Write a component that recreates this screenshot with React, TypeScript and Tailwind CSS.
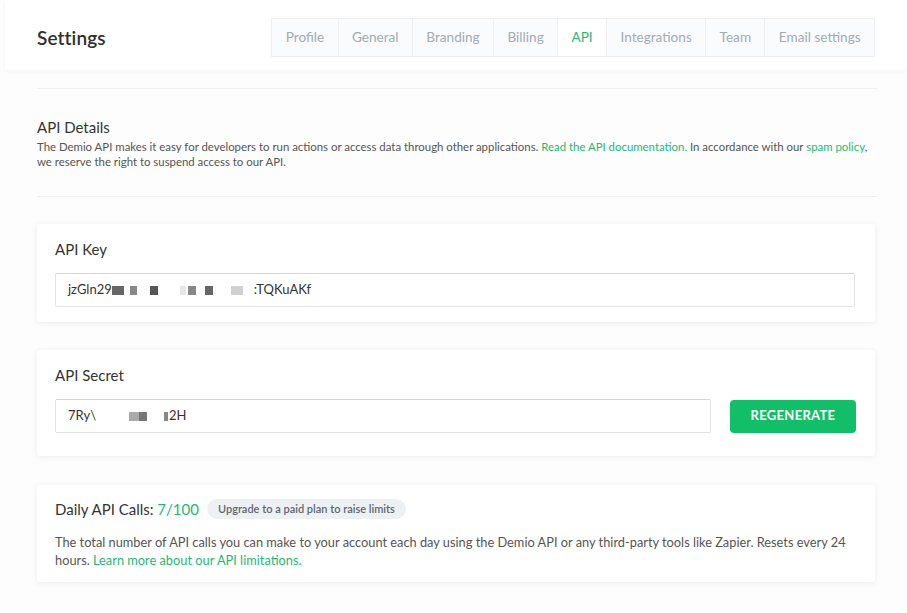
const tabs = ["Profile", "General", "Branding", "Billing", "API", "Integrations", "Team", "Email settings"];

// redacted pixel blocks in the key fields
function Block({ w, c, ml }: { w: string; c: string; ml: string }) {
  return <span className={`inline-block h-[9px] align-middle ${w} ${c} ${ml}`} />;
}

function Card({ children, className = "" }: { children: React.ReactNode; className?: string }) {
  return (
    <div className={`bg-white rounded-[3px] shadow-[0_1px_6px_rgba(0,0,0,0.07)] px-[18px] ${className}`}>
      {children}
    </div>
  );
}

export default function App() {
  return (
    <div className="min-h-screen bg-[#fdfdfd] text-[#333] font-['Lato','Liberation_Sans',sans-serif]">
      {/* Header */}
      <div className="h-[70px] bg-white ml-[5px] shadow-[0_1px_4px_rgba(0,0,0,0.04)] flex items-center pt-[6px] pl-[32px] pr-[32px] justify-between">
        <h1 className="text-[19px] font-semibold text-[#2f2f2f] tracking-[0.1px]">Settings</h1>
        <div className="flex h-[39px] border border-[#efefef] bg-[#fafbfc] -mt-[1px]">
          {tabs.map((t, i) => (
            <div
              key={t}
              className={`flex items-center justify-center text-[13.6px] px-[13.4px] ${i > 0 ? "border-l border-[#efefef]" : ""} ${
                t === "API" ? "bg-white text-[#1fb876]" : "text-[#a2abb6]"
              }`}
            >
              {t}
            </div>
          ))}
        </div>
      </div>

      <div className="pl-[37px] pr-[30px]">
        <div className="mt-[18px] border-t border-[#f0f0f0]" />

        {/* API Details */}
        <div className="pt-[28px] pb-[27px] border-b border-[#f0f0f0]">
          <h2 className="text-[15px] leading-[20px] text-[#333]">API Details</h2>
          <p className="text-[11.4px] leading-[15px] text-[#555] mt-[2px] pr-[6px]">
            The Demio API makes it easy for developers to run actions or access data through other applications.{" "}
            <span className="text-[#1fb876]">Read the API documentation.</span> In accordance with our{" "}
            <span className="text-[#1fb876]">spam policy</span>, we reserve the right to suspend access to our API.
          </p>
        </div>

        <div className="pr-[2px]">
          {/* API Key */}
          <Card className="mt-[27px] pt-[15px] pb-[15px]">
            <div className="text-[15px] leading-[20px]">API Key</div>
            <div className="mt-[14px] h-[34px] border border-[#e3e3e3] border-t-[#d6d6d6] rounded-[2px] flex items-center pl-[12px] text-[13px] text-[#333] mr-[2px]">
              <span>jzGln29</span>
              <Block w="w-[12px]" c="bg-[#666]" ml="ml-0" />
              <Block w="w-[7px]" c="bg-[#888]" ml="ml-[6px]" />
              <Block w="w-[8px]" c="bg-[#555]" ml="ml-[13px]" />
              <Block w="w-[6px]" c="bg-[#e6e6e6]" ml="ml-[22px]" />
              <Block w="w-[8px]" c="bg-[#888]" ml="ml-[2px]" />
              <Block w="w-[8px]" c="bg-[#666]" ml="ml-[9px]" />
              <Block w="w-[12px]" c="bg-[#d0d0d0]" ml="ml-[18px]" />
              <span className="ml-[11px]">:TQKuAKf</span>
            </div>
          </Card>

          {/* API Secret */}
          <Card className="mt-[28px] pt-[15px] pb-[23px]">
            <div className="text-[15px] leading-[20px]">API Secret</div>
            <div className="mt-[14px] flex items-center gap-[19px] pr-[1px]">
              <div className="flex-1 h-[34px] border border-[#e3e3e3] border-t-[#d6d6d6] rounded-[2px] flex items-center pl-[12px] text-[13px] text-[#333]">
                <span>7Ry\</span>
                <Block w="w-[10px]" c="bg-[#aaa]" ml="ml-[33px]" />
                <Block w="w-[8px]" c="bg-[#777]" ml="ml-0" />
                <Block w="w-[4px]" c="bg-[#888]" ml="ml-[17px]" />
                <span className="ml-[1px]">2H</span>
              </div>
              <button className="w-[126px] h-[33px] rounded-[4px] bg-[#13be68] text-white text-[13px] font-bold tracking-[0.3px]">
                REGENERATE
              </button>
            </div>
          </Card>

          {/* Daily API Calls */}
          <Card className="mt-[29px] pt-[14px] pb-[13px]">
            <div className="flex items-center gap-[8px]">
              <div className="text-[15px] leading-[20px]">
                Daily API Calls: <span className="text-[#1fb876]">7/100</span>
              </div>
              <span className="h-[20px] flex items-center px-[11px] rounded-full bg-[#eef1f4] text-[11px] font-semibold text-[#606770]">
                Upgrade to a paid plan to raise limits
              </span>
            </div>
            <p className="mt-[14px] text-[12.8px] leading-[18px] text-[#555] pr-[10px]">
              The total number of API calls you can make to your account each day using the Demio API or any third-party tools like Zapier. Resets every 24 hours.{" "}
              <span className="text-[#1fb876]">Learn more about our API limitations.</span>
            </p>
          </Card>
        </div>
      </div>
    </div>
  );
}
